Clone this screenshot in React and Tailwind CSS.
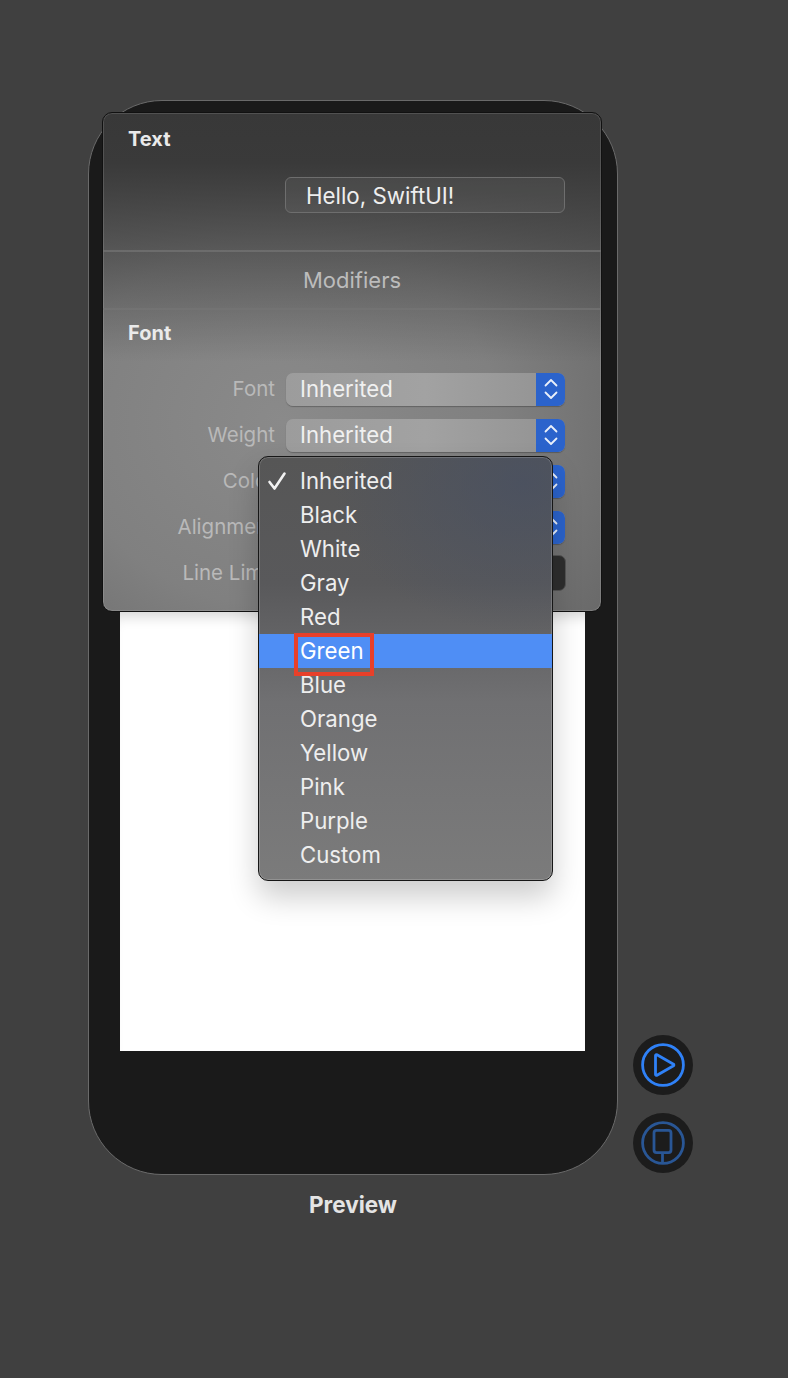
import React from "react";

const COLORS = ["Black", "White", "Gray", "Red"];
const COLORS_AFTER = ["Blue", "Orange", "Yellow", "Pink", "Purple", "Custom"];

function Stepper({ className = "" }) {
  return (
    <svg viewBox="0 0 28 32" className={`w-[28px] h-[32px] ${className}`} fill="none" stroke="#fff" strokeOpacity="0.9" strokeWidth="1.8" strokeLinecap="round" strokeLinejoin="round">
      <path d="M8.5 12.5 14 7l5.5 5.5" />
      <path d="M8.5 19.5 14 25l5.5-5.5" />
    </svg>
  );
}

function SelectRow({ label, value }) {
  return (
    <div className="flex items-center h-[34px] mb-[12px]">
      <div className="w-[183px] pr-[11px] text-right text-[20.5px] text-[#b9b9b9]">{label}</div>
      <div className="flex-1 h-[33px] mr-[36px] rounded-[7px] flex overflow-hidden bg-gradient-to-r from-[#9c9c9c] via-[#a2a2a2] to-[#929292] shadow-[0_1px_1px_rgba(0,0,0,0.25)]">
        <div className="flex-1 pl-[14px] text-[22.2px] leading-[31px] text-[#f0f0f0]">{value}</div>
        <div className="w-[29px] bg-[#2b63cc] flex items-center justify-center">
          <Stepper />
        </div>
      </div>
    </div>
  );
}

export default function App() {
  return (
    <div className="relative w-[788px] h-[1378px] bg-[#404040] overflow-hidden pt-[100px] pl-[88px] font-['Inter',sans-serif]">
      <div className="flex items-end gap-[15px]">
        {/* device */}
        <div className="relative w-[530px] h-[1075px] rounded-[74px] bg-[#1a1a1a] border border-[#6a6a6a] pt-[511px] px-[31px]">
          <div className="w-[465px] h-[439px] bg-white shadow-[inset_0_14px_14px_-10px_rgba(0,0,0,0.18)]" />

          {/* inspector popover */}
          <div className="absolute left-[13px] top-[11px] w-[500px] h-[500px] rounded-[10px] border border-[#111] overflow-hidden shadow-[inset_0_0_0_1px_rgba(255,255,255,0.13)] bg-[linear-gradient(180deg,#383838_0%,#3a3a3a_10%,rgba(58,58,58,0.5)_30%,rgba(58,58,58,0)_50%),radial-gradient(ellipse_430px_370px_at_36%_62%,#8a8a8a_0%,#808080_50%,#6c6c6c_85%,#646464_100%)]">
            <div className="h-[137px] relative">
              <div className="pt-[14px] pl-[25px] text-[20px] font-bold text-[#eaeaea] leading-[24px]">Text</div>
              <div className="absolute left-[182px] top-[64px] w-[280px] h-[36px] rounded-[6px] border border-[#6e6e6e] bg-white/5 pl-[20px] text-[22.3px] leading-[35px] text-[#eeeeee]">
                Hello, SwiftUI!
              </div>
            </div>
            <div className="h-[60px] border-y-2 border-[#757575]/70 text-center text-[22px] leading-[56px] text-[#bcbcbc]">Modifiers</div>
            <div className="pt-[11px] pl-[25px] text-[20px] font-bold text-[#eaeaea] leading-[24px]">Font</div>
            <div className="pt-[27px] pl-0">
              <SelectRow label="Font" value="Inherited" />
              <SelectRow label="Weight" value="Inherited" />
              <SelectRow label="Color" value="Inherited" />
              <SelectRow label="Alignment" value="Inherited" />
              <div className="flex items-center h-[34px]">
                <div className="w-[183px] pr-[11px] text-right text-[20.5px] text-[#b9b9b9]">Line Limit</div>
                <div className="flex-1 h-[36px] mr-[35px] rounded-[7px] bg-[#2e2e2e] border border-[#555]" />
              </div>
            </div>
          </div>

          {/* color menu */}
          <div className="absolute left-[169px] top-[355px] w-[295px] h-[425px] rounded-[10px] border border-[#161616] overflow-hidden pt-[7px] shadow-[0_16px_30px_rgba(0,0,0,0.2),inset_0_0_0_1px_rgba(255,255,255,0.18)] bg-[radial-gradient(ellipse_190px_150px_at_90%_6%,rgba(72,80,98,0.75)_0%,rgba(72,80,98,0)_100%),linear-gradient(180deg,#565656_0%,#59595b_30%,#707072_58%,#7b7b7b_100%)]">
            <div className="relative h-[34px] pl-[41px] text-[22.2px] leading-[34px] text-[#eeeeee]">
              <svg viewBox="0 0 20 20" className="absolute left-[8px] top-[7px] w-[20px] h-[20px]" fill="none" stroke="#f2f2f2" strokeWidth="2.6" strokeLinecap="round" strokeLinejoin="round">
                <path d="M2.5 11 7.5 17.5 17.5 2.5" />
              </svg>
              Inherited
            </div>
            {COLORS.map((c) => (
              <div key={c} className="h-[34px] pl-[41px] text-[22.2px] leading-[34px] text-[#eeeeee]">{c}</div>
            ))}
            <div className="relative h-[34px] pl-[41px] bg-[#4f8ef5] text-[22.2px] leading-[34px] text-white">
              Green
              <div className="absolute left-[35px] top-[-1px] w-[80px] h-[43px] border-[4px] border-[#e8402a]" />
            </div>
            {COLORS_AFTER.map((c) => (
              <div key={c} className="h-[34px] pl-[41px] text-[22.2px] leading-[34px] text-[#eeeeee]">{c}</div>
            ))}
          </div>

          <div className="absolute left-0 right-0 top-[1090px] text-center text-[22.5px] font-bold leading-[28px] text-[#e4e4e4]">Preview</div>
        </div>

        {/* side buttons */}
        <div className="flex flex-col gap-[18px] mb-[2px]">
          <div className="w-[60px] h-[60px] rounded-full bg-[#1c1c1c] flex items-center justify-center">
            <svg viewBox="0 0 44 44" className="w-[44px] h-[44px]" fill="none" stroke="#2f81f7" strokeWidth="2.8" strokeLinejoin="round">
              <circle cx="22" cy="22" r="20.4" />
              <path d="M14.5 12.5v19a1 1 0 0 0 1.5.8l16.5-9.5a1 1 0 0 0 0-1.6l-16.5-9.5a1 1 0 0 0-1.5.8z" />
            </svg>
          </div>
          <div className="w-[60px] h-[60px] rounded-full bg-[#1c1c1c] flex items-center justify-center">
            <svg viewBox="0 0 44 44" className="w-[44px] h-[44px]" fill="none" stroke="#295695" strokeWidth="2.8" strokeLinejoin="round">
              <circle cx="22" cy="22" r="20.4" />
              <rect x="13" y="9.4" width="17" height="22.2" rx="2.5" />
              <path d="M21.5 31.6v10.4" />
            </svg>
          </div>
        </div>
      </div>
    </div>
  );
}
